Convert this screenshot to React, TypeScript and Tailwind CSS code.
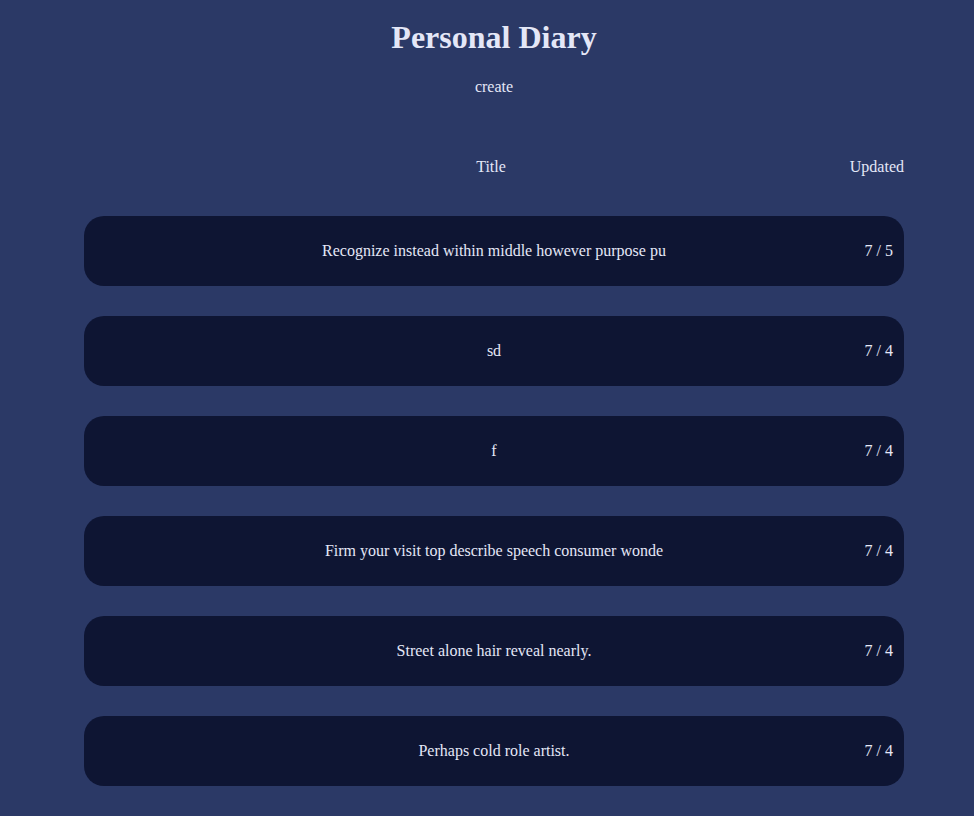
const entries = [
  { title: 'Recognize instead within middle however purpose pu', updated: '7 / 5' },
  { title: 'sd', updated: '7 / 4' },
  { title: 'f', updated: '7 / 4' },
  { title: 'Firm your visit top describe speech consumer wonde', updated: '7 / 4' },
  { title: 'Street alone hair reveal nearly.', updated: '7 / 4' },
  { title: 'Perhaps cold role artist.', updated: '7 / 4' },
];

export default function App() {
  return (
    <div className="min-h-[816px] bg-[#2b3966] text-[#e4e7f7] font-['Liberation_Serif',serif]">
      <div className="ml-[84px] w-[820px] pt-[19px]">
        <h1 className="text-center text-[32px] font-bold leading-[36px]">Personal Diary</h1>
        <div className="mt-[23px] text-center text-base leading-[18px]">create</div>

        {/* header */}
        <div className="relative mt-[62px] h-[18px] text-base leading-[18px]">
          <div className="pr-[6px] text-center">Title</div>
          <div className="absolute right-0 top-0">Updated</div>
        </div>

        <div className="mt-[40px] flex flex-col gap-[30px] pb-[30px]">
          {entries.map((e, i) => (
            <div key={i} className="relative flex h-[70px] items-center justify-center rounded-[20px] bg-[#0e1533] text-base">
              <span>{e.title}</span>
              <span className="absolute right-[11px] top-1/2 -translate-y-1/2">{e.updated}</span>
            </div>
          ))}
        </div>
      </div>
    </div>
  );
}
